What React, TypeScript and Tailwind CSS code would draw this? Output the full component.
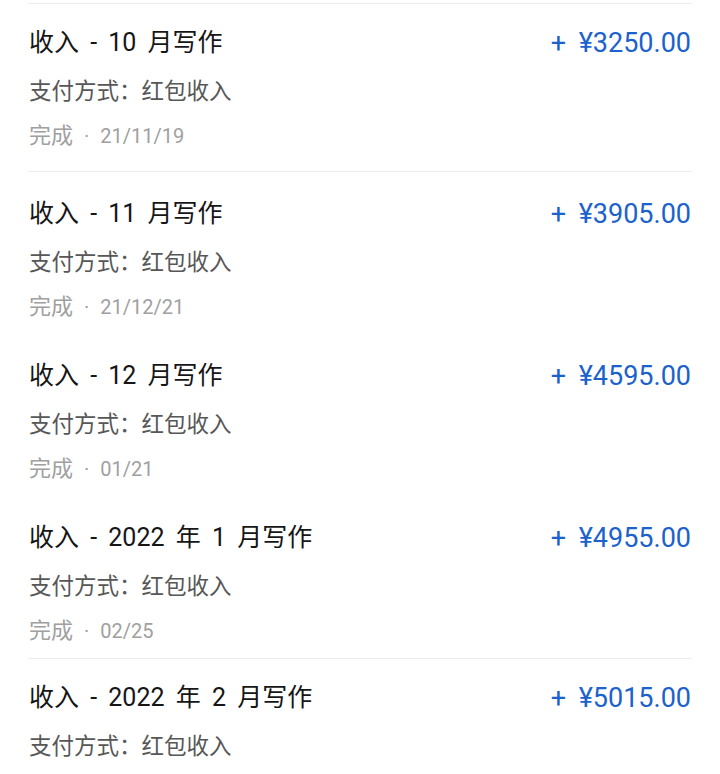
// App.tsx
const font = {
  fontFamily: 'Roboto, "Noto Sans CJK SC", sans-serif',
};

type Row = {
  title: string;
  amount: string;
  date?: string;
  pad: string;
  divider: boolean;
};

const rows: Row[] = [
  { title: "收入 - 10 月写作", amount: "+ ¥3250.00", date: "21/11/19", pad: "pt-[22px] pb-[20px]", divider: true },
  { title: "收入 - 11 月写作", amount: "+ ¥3905.00", date: "21/12/21", pad: "pt-[25px] pb-[19px]", divider: false },
  { title: "收入 - 12 月写作", amount: "+ ¥4595.00", date: "01/21", pad: "pt-[18px] pb-[18px]", divider: false },
  { title: "收入 - 2022 年 1 月写作", amount: "+ ¥4955.00", date: "02/25", pad: "pt-[19px] pb-[12px]", divider: true },
  { title: "收入 - 2022 年 2 月写作", amount: "+ ¥5015.00", pad: "pt-[22px] pb-[20px]", divider: false },
];

export default function App() {
  return (
    <div className="w-[720px] h-[774px] bg-white overflow-hidden" style={font}>
      <div className="px-[28px] pt-[3px]">
        <div className="h-px bg-[#ececec]" />
        {rows.map((r) => (
          <div key={r.title}>
            <div className={`flex justify-between ${r.pad}`}>
              <div className="flex flex-col">
                <div className="h-[34px] leading-[34px] text-[25px] text-[#161616] pl-[1px] whitespace-pre [word-spacing:5px]">
                  {r.title}
                </div>
                <div className="mt-[16px] h-[30px] leading-[30px] text-[22.5px] text-[#575757] pl-[1px]">
                  支付方式：红包收入
                </div>
                {r.date && (
                  <div className="mt-[15px] h-[30px] leading-[30px] text-[#a0a0a0] pl-[1px] whitespace-pre">
                    <span className="text-[22px]">完成</span>
                    <span className="text-[20px] [word-spacing:6px]"> · {r.date}</span>
                  </div>
                )}
              </div>
              <div className="h-[34px] leading-[34px] text-[27px] text-[#1c62cc] pr-[1px] [word-spacing:6px]">
                {r.amount}
              </div>
            </div>
            {r.divider && <div className="h-px bg-[#ececec]" />}
          </div>
        ))}
      </div>
    </div>
  );
}
